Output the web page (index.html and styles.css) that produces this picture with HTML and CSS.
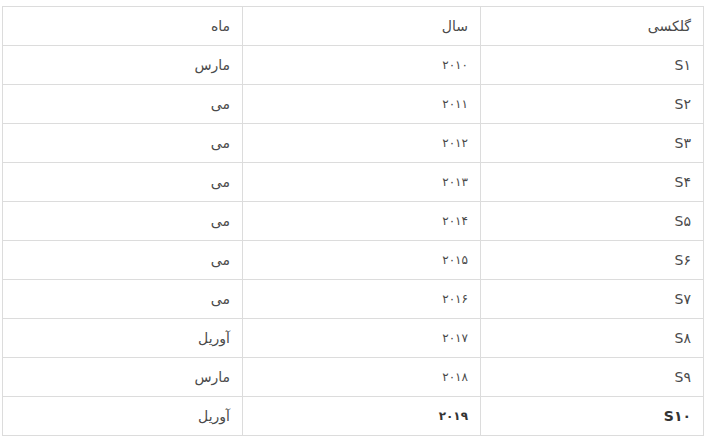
FILE: index.html
```html
<!DOCTYPE html>
<html lang="fa" dir="rtl">
<head>
<meta charset="utf-8">
<link rel="stylesheet" href="styles.css">
</head>
<body>
<div class="wrap">
<table class="tbl">
<colgroup><col class="c1"><col class="c2"><col class="c3"></colgroup>
<tbody>
<tr><td>گلکسی</td><td>سال</td><td>ماه</td></tr>
<tr><td>S۱</td><td class="num">۲۰۱۰</td><td>مارس</td></tr>
<tr><td>S۲</td><td class="num">۲۰۱۱</td><td>می</td></tr>
<tr><td>S۳</td><td class="num">۲۰۱۲</td><td>می</td></tr>
<tr><td>S۴</td><td class="num">۲۰۱۳</td><td>می</td></tr>
<tr><td>S۵</td><td class="num">۲۰۱۴</td><td>می</td></tr>
<tr><td>S۶</td><td class="num">۲۰۱۵</td><td>می</td></tr>
<tr><td>S۷</td><td class="num">۲۰۱۶</td><td>می</td></tr>
<tr><td>S۸</td><td class="num">۲۰۱۷</td><td>آوریل</td></tr>
<tr><td>S۹</td><td class="num">۲۰۱۸</td><td>مارس</td></tr>
<tr><td class="b">S۱۰</td><td class="num b">۲۰۱۹</td><td>آوریل</td></tr>
</tbody>
</table>
</div>
</body>
</html>
```
FILE: styles.css
```css
html, body { margin: 0; padding: 0; background: #fff; }
.wrap { padding: 6px 3px 0 3px; }
.tbl {
  width: 701px;
  border-collapse: collapse;
  table-layout: fixed;
  font-family: "DejaVu Sans", "Noto Sans", sans-serif;
  font-size: 14px;
  color: #4a4a4a;
}
.c1 { width: 223px; }
.c2 { width: 238px; }
.c3 { width: 240px; }
.tbl td {
  border: 1px solid #dcdcdc;
  height: 39px;
  padding: 0 12px 0 10px;
  text-align: right;
  vertical-align: middle;
  box-sizing: border-box;
}
.tbl td.num { font-size: 12px; letter-spacing: -1px; }
.tbl td.b { font-weight: bold; color: #333; }
```
